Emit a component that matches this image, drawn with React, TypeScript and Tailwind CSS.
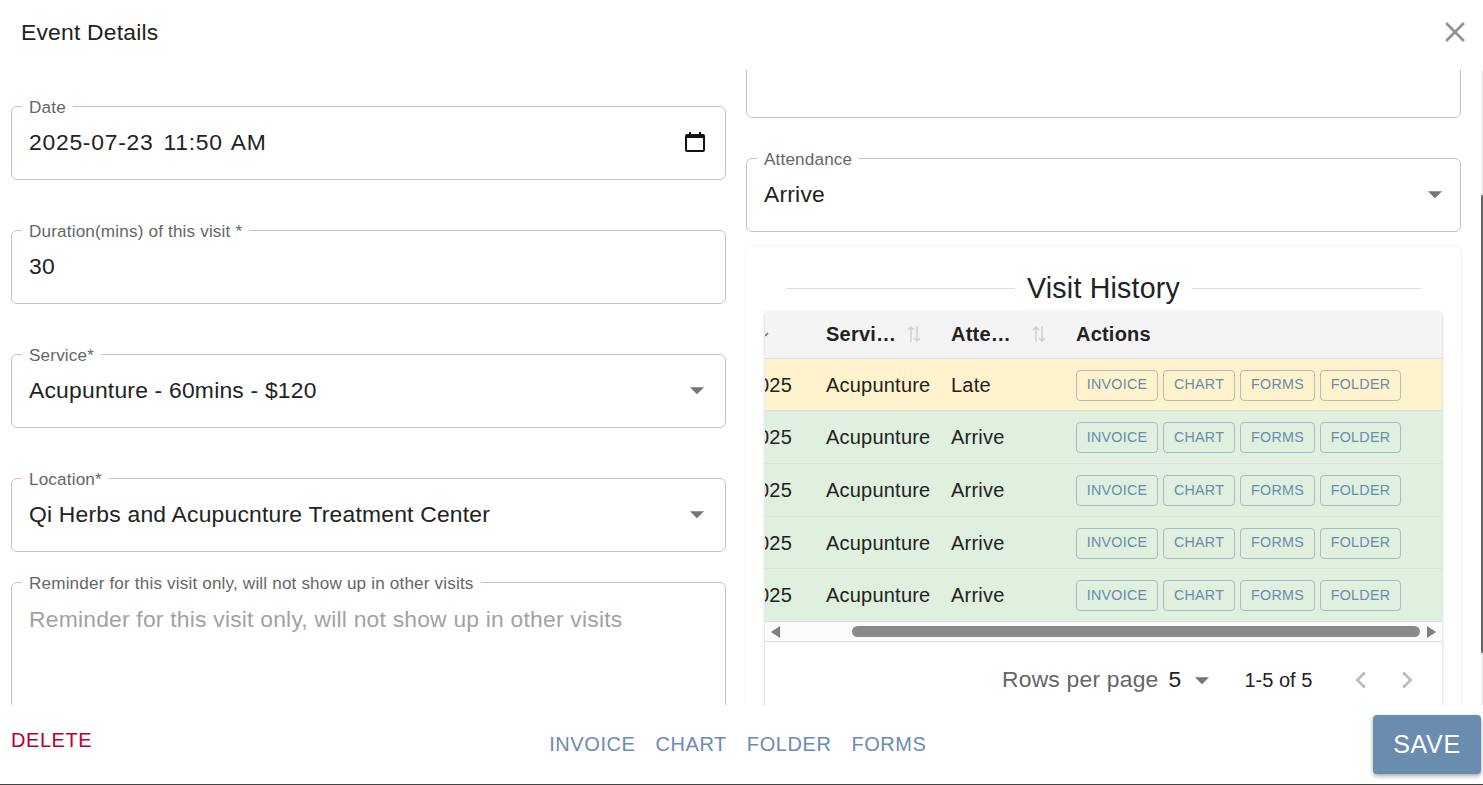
import React, { type ReactNode } from 'react';

const rows = [
  { status: 'Late', bg: 'bg-[#fff3cd]', h: 'h-[52px]' },
  { status: 'Arrive', bg: 'bg-[#dff0df]', h: 'h-[53px]' },
  { status: 'Arrive', bg: 'bg-[#dff0df]', h: 'h-[53px]' },
  { status: 'Arrive', bg: 'bg-[#dff0df]', h: 'h-[52px]' },
  { status: 'Arrive', bg: 'bg-[#dff0df]', h: 'h-[53px]' },
];

function Field({
  label,
  className,
  children,
}: {
  label: string;
  className?: string;
  children?: ReactNode;
}) {
  return (
    <div className={`relative shrink-0 rounded-[6px] border border-[#c4c4c4] pl-[17px] pr-[11px] ${className ?? 'h-[74px]'}`}>
      <span className="absolute -top-[10px] left-[10px] bg-white px-[7px] text-[17.14px] leading-[20px] tracking-[0.16px] text-[#666]">
        {label}
      </span>
      {children}
    </div>
  );
}

function Value({ children, arrow }: { children: ReactNode; arrow?: boolean }) {
  return (
    <div className="flex h-full items-center justify-between pb-[2px] text-[22.86px] tracking-[0.214px] text-[#222]">
      <span>{children}</span>
      {arrow && <Caret className="h-[34px] w-[34px] text-[#757575]" />}
    </div>
  );
}

function Caret({ className }: { className?: string }) {
  return (
    <svg viewBox="0 0 24 24" fill="currentColor" className={className}>
      <path d="M7 10l5 5 5-5z" />
    </svg>
  );
}

function SortIcon() {
  return (
    <svg viewBox="0 0 14 18" className="h-[18px] w-[14px] text-[#d2d2d2]" fill="none" stroke="currentColor" strokeWidth="1.6">
      <path d="M4 17V2M1 5l3-3 3 3M10 1v15M7 13l3 3 3-3" />
    </svg>
  );
}

function ActionButton({ label, w }: { label: string; w: string }) {
  return (
    <button className={`h-[31px] ${w} rounded-[4px] border border-[#6a8caf]/50 text-[14.3px] tracking-[0.25px] text-[#6a8caf]`}>
      {label}
    </button>
  );
}

export default function App() {
  return (
    <div className="flex h-[785px] w-[1483px] flex-col overflow-hidden border-b border-[#444] bg-white font-['Liberation_Sans',Arial,sans-serif]">
      <header className="flex h-[70px] shrink-0 items-center justify-between pb-[6px] pl-[21px] pr-[11px]">
        <h1 className="text-[22.86px] tracking-[0.214px] text-[#222]">Event Details</h1>
        <svg viewBox="0 0 24 24" fill="#949494" className="h-[34px] w-[34px]">
          <path d="M19 6.41 17.59 5 12 10.59 6.41 5 5 6.41 10.59 12 5 17.59 6.41 19 12 13.41 17.59 19 19 17.59 13.41 12z" />
        </svg>
      </header>

      <main className="relative flex min-h-0 flex-1 gap-[20px] overflow-hidden pl-[11px]">
        <section className="flex w-[715px] shrink-0 flex-col pt-[36px]">
          <Field label="Date">
            <div className="flex h-full items-center justify-between pb-[2px] pr-[9px] text-[22.86px] text-[#222]">
              <span className="flex gap-[10px] tracking-[0.75px]">
                <span>2025-07-23</span>
                <span>11:50</span>
                <span className="-ml-[2px]">AM</span>
              </span>
              <svg viewBox="0 0 20 20" className="h-[20px] w-[20px]" fill="#111">
                <path fillRule="evenodd" d="M4 0h2v2h8V0h2v2h2a2 2 0 0 1 2 2v14a2 2 0 0 1-2 2H2a2 2 0 0 1-2-2V4a2 2 0 0 1 2-2h2zM2 6v12h16V6z" />
              </svg>
            </div>
          </Field>
          <Field label="Duration(mins) of this visit *" className="mt-[50px] h-[74px]">
            <Value>30</Value>
          </Field>
          <Field label="Service*" className="mt-[50px] h-[74px]">
            <Value arrow>Acupunture - 60mins - $120</Value>
          </Field>
          <Field label="Location*" className="mt-[50px] h-[74px]">
            <Value arrow>Qi Herbs and Acupucnture Treatment Center</Value>
          </Field>
          <Field label="Reminder for this visit only, will not show up in other visits" className="mt-[30px] h-[200px]">
            <div className="pt-[20px] text-[22.86px] leading-[32px] tracking-[0.214px] text-[#a2a2a2]">
              Reminder for this visit only, will not show up in other visits
            </div>
          </Field>
        </section>

        <section className="flex w-[715px] shrink-0 flex-col">
          <div className="-mt-[30px] h-[78px] shrink-0 rounded-[6px] border border-[#c4c4c4]" />
          <Field label="Attendance" className="mt-[40px] h-[74px]">
            <div className="-mr-[3px] h-full">
              <Value arrow>Arrive</Value>
            </div>
          </Field>
          <div className="mt-[14px] shrink-0 rounded-[6px] px-[19px] pt-[23px] shadow-[0_0_3px_rgba(0,0,0,0.1)]">
            <div className="mb-[4px] flex items-center justify-center gap-[12px] px-[21px]">
              <div className="h-px flex-1 bg-[#ddd]" />
              <h2 className="text-[28.57px] leading-[38px] tracking-[0.2px] text-[#222]">Visit History</h2>
              <div className="h-px flex-1 bg-[#ddd]" />
            </div>
            <div className="rounded-[4px] shadow-[0_1px_3px_rgba(0,0,0,0.25)]">
              <div className="flex h-[48px] items-center overflow-hidden rounded-t-[4px] border-b border-[#ddd] bg-[#f4f4f4] pb-[1px] text-[20px] font-bold tracking-[0.214px] text-[#222]">
                <div className="w-[61px] shrink-0">
                  <svg viewBox="0 0 4 6" className="h-[6px] w-[4px]" fill="none" stroke="#666" strokeWidth="1.4">
                    <path d="M0 5 3 2" />
                  </svg>
                </div>
                <div className="flex w-[125px] shrink-0 items-center gap-[11px]">
                  <span>Servi…</span>
                  <SortIcon />
                </div>
                <div className="flex w-[125px] shrink-0 items-center gap-[21px]">
                  <span>Atte…</span>
                  <SortIcon />
                </div>
                <span>Actions</span>
              </div>
              {rows.map((row, i) => (
                <div
                  key={i}
                  className={`flex ${row.h} items-center overflow-hidden border-b border-[#ddd] text-[20px] tracking-[0.214px] text-[#222] ${row.bg}`}
                >
                  <div className="flex w-[61px] shrink-0 justify-end overflow-hidden pr-[34px]">
                    <span className="shrink-0">2025</span>
                  </div>
                  <div className="w-[125px] shrink-0">Acupunture</div>
                  <div className="w-[125px] shrink-0">{row.status}</div>
                  <div className="mt-[1px] flex gap-[5px]">
                    <ActionButton label="INVOICE" w="w-[82px]" />
                    <ActionButton label="CHART" w="w-[72px]" />
                    <ActionButton label="FORMS" w="w-[75px]" />
                    <ActionButton label="FOLDER" w="w-[81px]" />
                  </div>
                </div>
              ))}
              <div className="flex h-[20px] items-center justify-between border-b border-[#ddd] bg-[#fbfbfb] px-[6px]">
                <span className="h-0 w-0 border-y-[6px] border-r-[9px] border-y-transparent border-r-[#808080]" />
                <div className="ml-[72px] mr-[7px] h-[11px] flex-1 rounded-full bg-[#8a8a8a]" />
                <span className="h-0 w-0 border-y-[6px] border-l-[9px] border-y-transparent border-l-[#808080]" />
              </div>
              <div className="flex h-[80px] items-center pb-[5px] pl-[237px] text-[22.86px] tracking-[0.214px] text-[#666]">
                <span>Rows per page</span>
                <span className="ml-[10px] text-[#222]">5</span>
                <Caret className="ml-[4px] h-[34px] w-[34px] text-[#757575]" />
                <span className="ml-[25px] text-[20px] tracking-normal text-[#222]">1-5 of 5</span>
                <svg viewBox="0 0 24 24" className="ml-[32px] h-[34px] w-[34px]" fill="#bdbdbd">
                  <path d="M15.41 16.59 10.83 12l4.58-4.59L14 6l-6 6 6 6z" />
                </svg>
                <svg viewBox="0 0 24 24" className="ml-[12px] h-[34px] w-[34px]" fill="#bdbdbd">
                  <path d="M8.59 16.59 13.17 12 8.59 7.41 10 6l6 6-6 6z" />
                </svg>
              </div>
            </div>
          </div>
        </section>

        <div className="absolute bottom-0 right-0 top-0 w-[2px] bg-[#eeeeee]">
          <div className="mt-[125px] h-[458px] rounded-full bg-[#666]" />
        </div>
      </main>

      <footer className="flex h-[79px] shrink-0 items-start pl-[11px] pr-[2px]">
        <span className="mt-[20px] text-[20px] tracking-[0.57px] text-[#b8002a]">DELETE</span>
        <nav className="ml-[457px] mt-[24px] flex gap-[20px] text-[20px] tracking-[0.57px] text-[#6a8caf]">
          <span>INVOICE</span>
          <span>CHART</span>
          <span>FOLDER</span>
          <span>FORMS</span>
        </nav>
        <button className="ml-auto mt-[10px] h-[59px] w-[108px] rounded-[4px] bg-[#6a8caf] text-[25px] tracking-[0.7px] text-white shadow-[0_2px_4px_rgba(0,0,0,0.35)]">
          SAVE
        </button>
      </footer>
    </div>
  );
}
